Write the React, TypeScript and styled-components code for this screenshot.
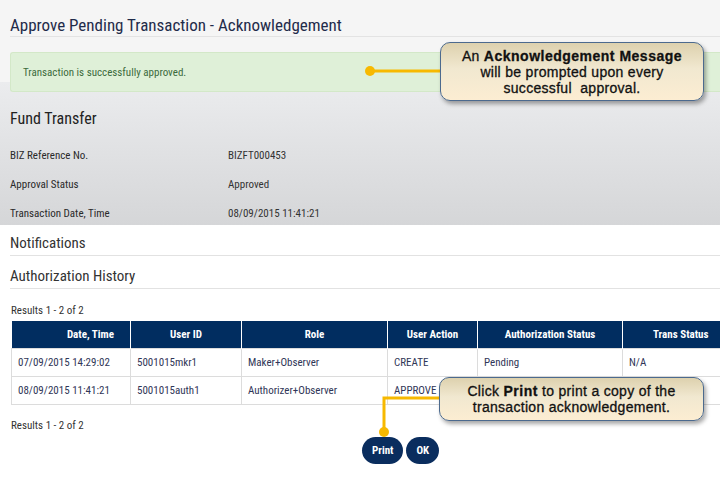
import React from 'react';
import styled, { createGlobalStyle } from 'styled-components';

const GlobalStyle = createGlobalStyle`
  html, body {
    margin: 0;
    padding: 0;
    background: #ffffff;
  }
  body {
    font-family: "Liberation Sans Narrow", "Roboto Condensed", Roboto, sans-serif;
  }
`;

const Page = styled.div`
  position: relative;
  width: 720px;
  height: 480px;
  overflow: hidden;
  background: #ffffff;
`;

const TopArea = styled.div`
  height: 225px;
  background: linear-gradient(
    to bottom,
    #f5f5f5 0,
    #f5f5f5 82px,
    #ebecee 82px,
    #d5d6d8 100%
  );
`;

const PageTitle = styled.h1`
  margin: 0 0 0 10px;
  height: 37px;
  line-height: 50px;
  font-size: 17px;
  font-weight: normal;
  color: #1f2b4a;
  border-bottom: 1px solid #e3e3e3;
  box-sizing: border-box;
`;

const Alert = styled.div`
  margin: 15px 0 0 10px;
  height: 40px;
  box-sizing: border-box;
  padding-left: 12px;
  display: flex;
  align-items: center;
  background: #dff0d8;
  border: 1px solid #d3e8c8;
  border-right: none;
  border-radius: 3px 0 0 3px;
  font-size: 11px;
  color: #3c6b3c;
`;

const SectionTitle = styled.h2`
  margin: 17px 0 0 10px;
  font-size: 16px;
  font-weight: normal;
  color: #222;
`;

const DetailList = styled.div`
  margin-top: 13px;
  display: grid;
  grid-template-columns: 218px 1fr;
  padding-left: 10px;
`;

const DetailLabel = styled.div`
  height: 29px;
  line-height: 29px;
  font-size: 11px;
  color: #2a2a2a;
`;

const DetailValue = styled(DetailLabel)`
  color: #333;
`;

const Heading = styled.h3<{ $top: number }>`
  margin: ${(p) => p.$top}px 0 0 10px;
  padding-top: 8px;
  height: 24px;
  line-height: 24px;
  font-size: 15px;
  font-weight: normal;
  color: #333;
  border-bottom: 1px solid #e2e2e2;
`;

const ResultCount = styled.div<{ $top: number }>`
  margin: ${(p) => p.$top}px 0 0 11px;
  font-size: 11px;
  color: #333;
  height: 14px;
  line-height: 14px;
`;

const Table = styled.table`
  margin: 3px 0 0 11px;
  border-collapse: collapse;
  table-layout: fixed;
  width: 727px;
  font-size: 11px;
`;

const Th = styled.th<{ $w: number; $align?: string }>`
  width: ${(p) => p.$w}px;
  height: 27px;
  padding: 0 ${(p) => (p.$align === 'right' ? 16 : 4)}px 0 4px;
  box-sizing: border-box;
  background: #012d60;
  color: #ffffff;
  font-weight: bold;
  text-align: ${(p) => p.$align || 'center'};
  border-left: 1px solid #ffffff;
  white-space: nowrap;
  &:first-child {
    border-left: none;
  }
`;

const Td = styled.td`
  height: 28px;
  padding: 0 6px;
  box-sizing: border-box;
  color: #303657;
  border: 1px solid #dcdcdc;
  white-space: nowrap;
  overflow: hidden;
`;

const ButtonRow = styled.div`
  margin-top: 4px;
  padding-left: 362px;
  display: flex;
  gap: 3px;
`;

const Button = styled.button`
  height: 27px;
  padding: 0 10px;
  border: none;
  border-radius: 14px;
  background: #0a2d5e;
  color: #ffffff;
  font-family: inherit;
  font-size: 11px;
  font-weight: bold;
`;

const Callout = styled.div<{ $left: number; $top: number; $w: number; $h: number }>`
  position: absolute;
  left: ${(p) => p.$left}px;
  top: ${(p) => p.$top}px;
  width: ${(p) => p.$w}px;
  height: ${(p) => p.$h}px;
  box-sizing: border-box;
  display: flex;
  flex-direction: column;
  justify-content: center;
  align-items: center;
  border: 1.5px solid #4c6a8e;
  border-radius: 10px;
  background: linear-gradient(to bottom, #ddd1ae 0%, #f1e8d0 45%, #fcedd2 100%);
  box-shadow: 2px 3px 4px rgba(0, 0, 0, 0.35);
  font-family: "Liberation Sans", Arial, sans-serif;
  font-size: 14px;
  line-height: 16px;
  letter-spacing: 0.3px;
  color: #111;
  text-align: center;
  white-space: nowrap;
  -webkit-text-stroke: 0.3px #111;

  b {
    letter-spacing: 0.5px;
  }
`;

const Connector = styled.svg`
  position: absolute;
  left: 0;
  top: 0;
  pointer-events: none;
`;

const headers = [
  { label: 'Date, Time', w: 119, align: 'right' },
  { label: 'User ID', w: 111 },
  { label: 'Role', w: 146 },
  { label: 'User Action', w: 90 },
  { label: 'Authorization Status', w: 145 },
  { label: 'Trans Status', w: 116 },
];

const rows = [
  ['07/09/2015 14:29:02', '5001015mkr1', 'Maker+Observer', 'CREATE', 'Pending', 'N/A'],
  ['08/09/2015 11:41:21', '5001015auth1', 'Authorizer+Observer', 'APPROVE', '', ''],
];

const details = [
  ['BIZ Reference No.', 'BIZFT000453'],
  ['Approval Status', 'Approved'],
  ['Transaction Date, Time', '08/09/2015 11:41:21'],
];

export default function App() {
  return (
    <Page>
      <GlobalStyle />
      <TopArea>
        <PageTitle>Approve Pending Transaction - Acknowledgement</PageTitle>
        <Alert>Transaction is successfully approved.</Alert>
        <SectionTitle>Fund Transfer</SectionTitle>
        <DetailList>
          {details.map(([label, value]) => (
            <React.Fragment key={label}>
              <DetailLabel>{label}</DetailLabel>
              <DetailValue>{value}</DetailValue>
            </React.Fragment>
          ))}
        </DetailList>
      </TopArea>

      <Heading $top={-2}>Notifications</Heading>
      <Heading $top={0}>Authorization History</Heading>
      <ResultCount $top={15}>Results 1 - 2 of 2</ResultCount>
      <Table>
        <thead>
          <tr>
            {headers.map((h) => (
              <Th key={h.label} $w={h.w} $align={h.align}>
                {h.label}
              </Th>
            ))}
          </tr>
        </thead>
        <tbody>
          {rows.map((r) => (
            <tr key={r[0]}>
              {r.map((c, i) => (
                <Td key={i}>{c}</Td>
              ))}
            </tr>
          ))}
        </tbody>
      </Table>
      <ResultCount $top={14}>Results 1 - 2 of 2</ResultCount>
      <ButtonRow>
        <Button>Print</Button>
        <Button>OK</Button>
      </ButtonRow>

      <Connector width="720" height="480">
        <line x1="370" y1="71" x2="441" y2="71" stroke="#f7b900" strokeWidth="3" />
        <circle cx="370" cy="71" r="5" fill="#f7b900" />
        <polyline
          points="440,398 384,398 384,432"
          fill="none"
          stroke="#f7b900"
          strokeWidth="3"
        />
        <circle cx="384" cy="432" r="5" fill="#f7b900" />
      </Connector>

      <Callout $left={440} $top={42} $w={264} $h={59}>
        <div>
          An <b>Acknowledgement Message</b>
        </div>
        <div>will be prompted upon every</div>
        <div>successful&nbsp; approval.</div>
      </Callout>
      <Callout $left={439} $top={377} $w={265} $h={44}>
        <div>
          Click <b>Print</b> to print a copy of the
        </div>
        <div>transaction acknowledgement.</div>
      </Callout>
    </Page>
  );
}
